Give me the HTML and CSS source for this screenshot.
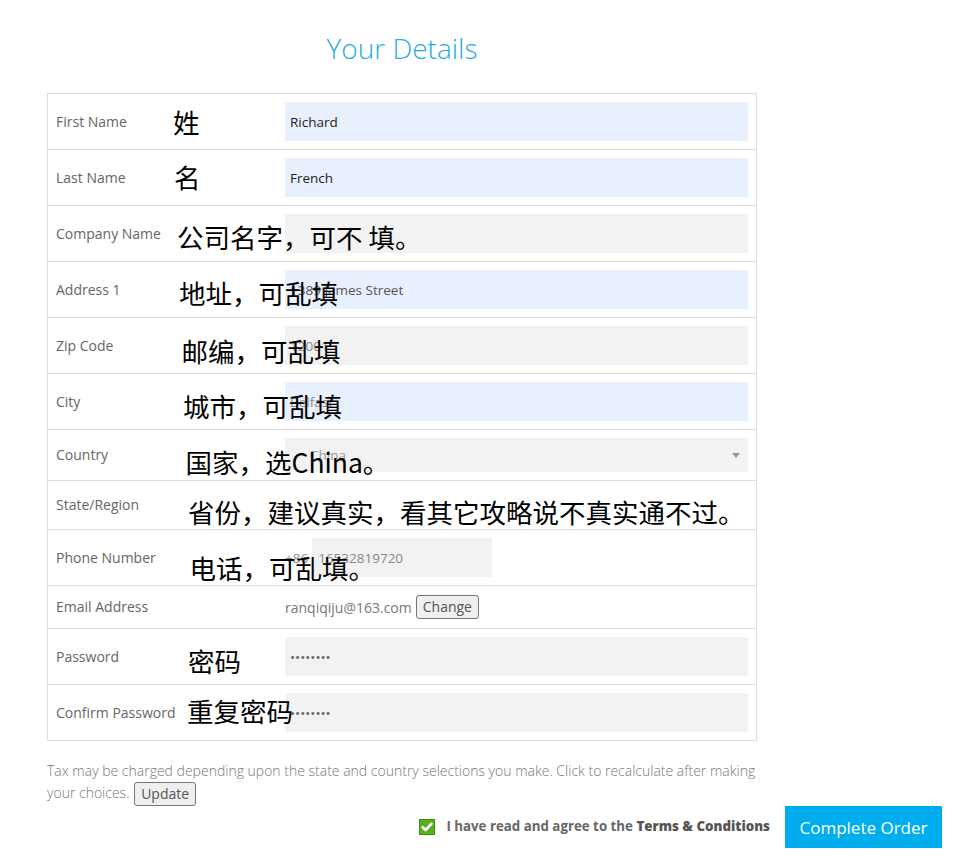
FILE: index.html
```html
<!DOCTYPE html>
<html lang="en">
<head>
<meta charset="utf-8">
<title>Your Details</title>
<link rel="stylesheet" href="styles.css">
</head>
<body>
<main class="page">
  <section class="details">
    <h1 class="title">Your Details</h1>
    <div class="form">
      <div class="row">
        <div class="label">First Name</div>
        <div class="field"><input class="input autofill dark" type="text" value="Richard"></div>
        <span class="note note-first">姓</span>
      </div>
      <div class="row">
        <div class="label">Last Name</div>
        <div class="field"><input class="input autofill dark" type="text" value="French"></div>
        <span class="note note-last">名</span>
      </div>
      <div class="row">
        <div class="label">Company Name</div>
        <div class="field"><input class="input" type="text" value=""></div>
        <span class="note note-company">公司名字，可不 填。</span>
      </div>
      <div class="row">
        <div class="label">Address 1</div>
        <div class="field"><input class="input autofill mid" type="text" value="1389 James Street"></div>
        <span class="note note-address">地址，可乱填</span>
      </div>
      <div class="row">
        <div class="label">Zip Code</div>
        <div class="field"><input class="input light" type="text" value="12001"></div>
        <span class="note note-zip">邮编，可乱填</span>
      </div>
      <div class="row">
        <div class="label">City</div>
        <div class="field"><input class="input autofill light" type="text" value="Belfast"></div>
        <span class="note note-city">城市，可乱填</span>
      </div>
      <div class="row row-country">
        <div class="label">Country</div>
        <div class="field">
          <div class="select"><span class="select-value">China</span></div>
        </div>
        <span class="note note-country">国家，选China。</span>
      </div>
      <div class="row row-state">
        <div class="label">State/Region</div>
        <div class="field"></div>
        <span class="note note-state">省份，建议真实，看其它攻略说不真实通不过。</span>
      </div>
      <div class="row">
        <div class="label">Phone Number</div>
        <div class="field phone">
          <span class="prefix">+86</span>
          <input class="input phone-input light" type="text" value="16532819720">
        </div>
        <span class="note note-phone">电话，可乱填。</span>
      </div>
      <div class="row row-email">
        <div class="label">Email Address</div>
        <div class="field email">
          <span class="email-text">ranqiqiju@163.com</span>
          <button class="btn-small" type="button">Change</button>
        </div>
      </div>
      <div class="row">
        <div class="label">Password</div>
        <div class="field"><input class="input pw" type="password" value="password"></div>
        <span class="note note-pw">密码</span>
      </div>
      <div class="row">
        <div class="label">Confirm Password</div>
        <div class="field"><input class="input pw" type="password" value="password"></div>
        <span class="note note-confirm">重复密码</span>
      </div>
    </div>
    <p class="tax">Tax may be charged depending upon the state and country selections you make. Click to recalculate after making your choices. <button class="btn-small btn-update" type="button">Update</button></p>
  </section>
  <div class="footer">
    <label class="agree">
      <svg class="check" width="16" height="16" viewBox="0 0 16 16" aria-hidden="true">
        <rect x="0.5" y="0.5" width="15" height="15" fill="#58b01c" stroke="#3f8f12"/>
        <path d="M3.6 8.2 L6.6 11 L12.4 4.8" fill="none" stroke="#fff" stroke-width="2.6" stroke-linecap="round" stroke-linejoin="round"/>
      </svg>
      <span class="agree-text">I have read and agree to the <strong class="terms">Terms &amp; Conditions</strong></span>
    </label>
    <button class="btn-order" type="button">Complete Order</button>
  </div>
</main>
</body>
</html>
```

FILE: styles.css
```css
* {
  box-sizing: border-box;
}

body {
  margin: 0;
  background: #fff;
  font-family: "Open Sans", "Liberation Sans", sans-serif;
  color: #666;
}

.page {
  width: 942px;
  padding: 30px 0 0 47px;
}

.details {
  width: 710px;
}

.title {
  margin: 0 0 27px;
  font-size: 28px;
  line-height: 36px;
  font-weight: 300;
  color: #29abe2;
  text-align: center;
}

.form {
  border: 1px solid #ddd;
}

.row {
  position: relative;
  display: grid;
  grid-template-columns: 229px 1fr;
  align-items: center;
  height: 55px;
  border-top: 1px solid #ddd;
  box-sizing: content-box;
}

.row:first-child {
  border-top: 0;
}

.row-country {
  height: 50px;
}

.row-state {
  height: 48px;
}

.row-email {
  height: 42px;
}

.label {
  padding: 0 8px 1px;
  font-size: 14px;
  color: #666;
  white-space: nowrap;
}

.field {
  padding: 0 8px;
  display: flex;
  align-items: center;
}

.input {
  display: block;
  width: 100%;
  height: 39px;
  border: 0;
  margin: 0;
  padding: 0 5px;
  background: #f2f2f2;
  font-family: "Open Sans", "Liberation Sans", sans-serif;
  font-size: 13.5px;
  color: #777;
  outline: none;
}

.autofill {
  background: #e8f0fe;
}

.dark {
  color: #222;
}

.mid {
  color: #555;
}

.light {
  color: #888;
}

.pw {
  color: #666;
}

.select {
  position: relative;
  width: 100%;
  height: 34px;
  background: #f2f2f2;
  display: flex;
  align-items: center;
  padding-left: 25px;
  font-size: 13.5px;
  color: #999;
}

.select::after {
  content: "";
  position: absolute;
  right: 8px;
  top: 15px;
  border-left: 4px solid transparent;
  border-right: 4px solid transparent;
  border-top: 5px solid #999;
}

.phone {
  gap: 4px;
}

.prefix {
  font-size: 13.5px;
  color: #888;
}

.phone-input {
  width: 180px;
  padding-left: 6px;
}

.email {
  gap: 4px;
}

.email-text {
  font-size: 14px;
  color: #777;
}

.btn-small {
  height: 24px;
  padding: 0 6px;
  margin: 0;
  border: 1px solid #767676;
  border-radius: 3px;
  background: #efefef;
  font-family: "Open Sans", "Liberation Sans", sans-serif;
  font-size: 14px;
  line-height: 20px;
  color: #555;
}

.note {
  position: absolute;
  font-family: "Noto Sans CJK SC", "Noto Sans", sans-serif;
  font-size: 26.5px;
  line-height: 1;
  color: #000;
  white-space: nowrap;
}

.note-first { left: 125px; top: 15px; }
.note-last { left: 126px; top: 13.5px; }
.note-company { left: 129px; top: 18px; }
.note-address { left: 131px; top: 18px; }
.note-zip { left: 133.5px; top: 19.5px; }
.note-city { left: 135px; top: 18.5px; }
.note-country { left: 137.5px; top: 19px; }
.note-state { left: 140px; top: 18px; }
.note-phone { left: 141.5px; top: 25px; }
.note-pw { left: 140px; top: 18.5px; }
.note-confirm { left: 139px; top: 12.5px; }

.tax {
  margin: 19px 0 0;
  font-size: 14px;
  line-height: 22px;
  font-weight: 300;
  color: #777;
}

.btn-update {
  margin: -1px 0 -1px 1px;
  vertical-align: middle;
}

.footer {
  display: flex;
  justify-content: flex-end;
  align-items: center;
  gap: 15px;
  width: 895px;
  margin-top: 1px;
}

.agree {
  display: flex;
  align-items: center;
  gap: 11px;
  padding-bottom: 2px;
  font-size: 13.3px;
  font-weight: 700;
  color: #666;
}

.check {
  display: block;
  margin-top: 2px;
}

.terms {
  color: #555;
}

.btn-order {
  width: 157px;
  height: 42px;
  border: 0;
  margin: 0;
  padding: 0;
  background: #00aeef;
  color: #fff;
  font-family: "Open Sans", "Liberation Sans", sans-serif;
  font-size: 17px;
}
```
